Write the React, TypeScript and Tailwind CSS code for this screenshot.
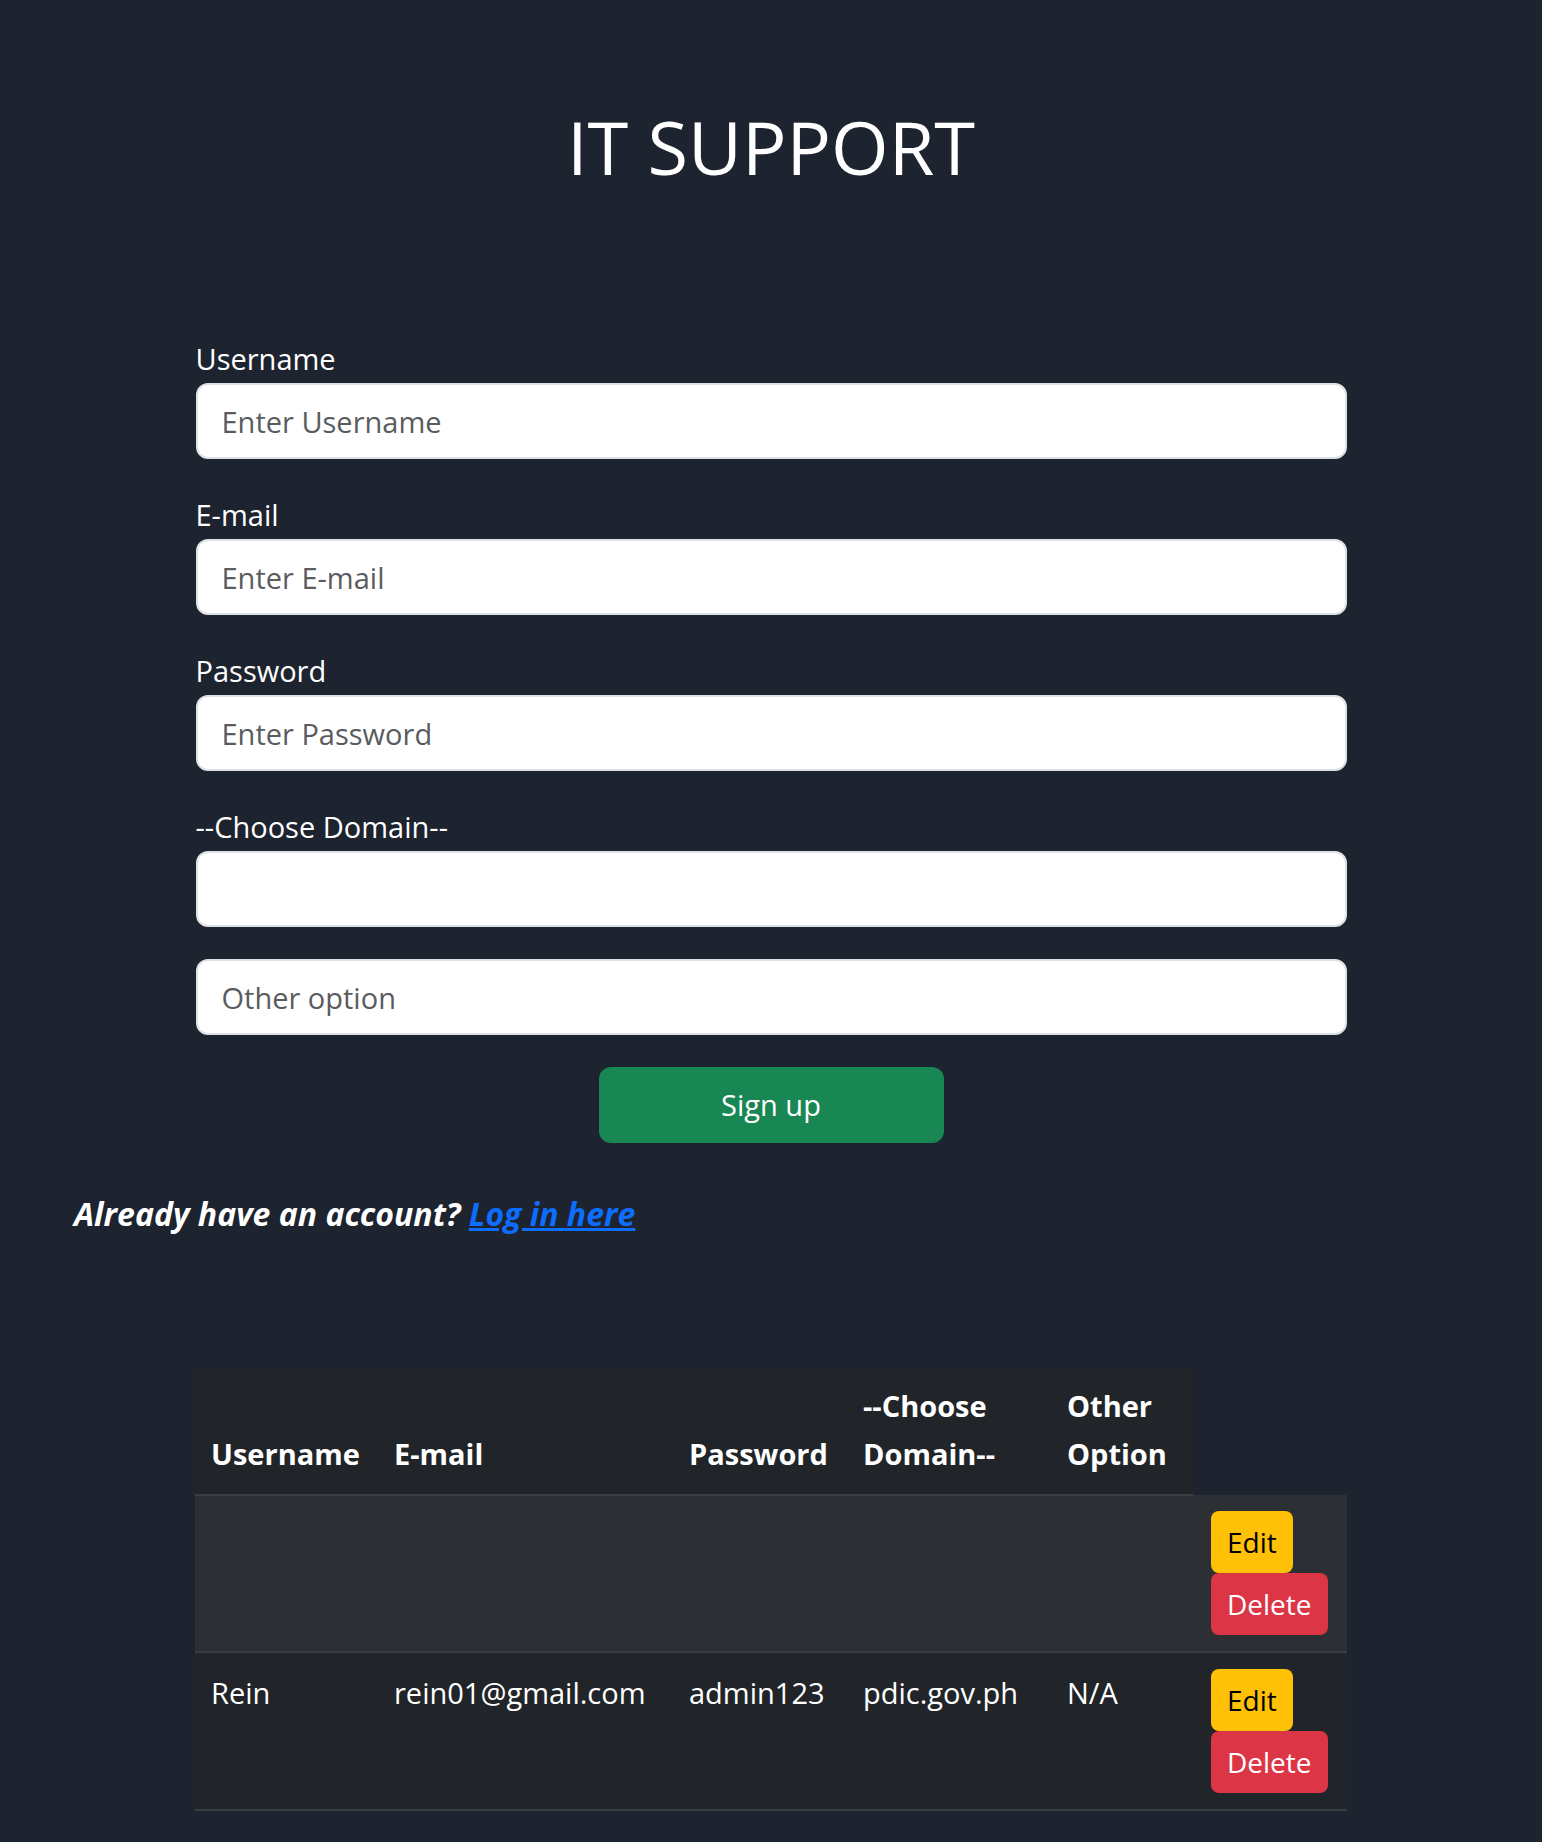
import React from 'react';

const rows = [
  { username: '', email: '', password: '', domain: '', other: '' },
  { username: 'Rein', email: 'rein01@gmail.com', password: 'admin123', domain: 'pdic.gov.ph', other: 'N/A' },
];

const Field = ({ label, placeholder }: { label?: string; placeholder?: string }) => (
  <div className="mb-[32px]">
    {label && <label className="block leading-[48px]">{label}</label>}
    <input
      type="text"
      placeholder={placeholder}
      className="block w-full h-[76px] px-[24px] bg-white text-[#212529] border-2 border-[#dee2e6] rounded-[12px] placeholder:text-[#595c5f] focus:outline-none"
    />
  </div>
);

const App = () => {
  return (
    <div className="min-h-screen bg-[#1e2330] text-white font-['Open_Sans',sans-serif] text-[29px]">
      <h1 className="pt-[99px] text-center text-[74px] leading-[96px] font-normal">IT SUPPORT</h1>

      <form className="w-[1151px] mx-auto mt-[140px]" onSubmit={(e) => e.preventDefault()}>
        <Field label="Username" placeholder="Enter Username" />
        <Field label="E-mail" placeholder="Enter E-mail" />
        <Field label="Password" placeholder="Enter Password" />
        <Field label="--Choose Domain--" />
        <Field placeholder="Other option" />
        <button
          type="submit"
          className="block mx-auto w-[345px] h-[76px] bg-[#198754] text-white rounded-[12px]"
        >
          Sign up
        </button>
      </form>

      <p className="pl-[74px] mt-[47px] leading-[48px] text-[32px] font-bold italic">
        Already have an account?{' '}
        <a href="#" className="text-[#0d6efd] underline">Log in here</a>
      </p>

      <table className="w-[1152px] mx-auto mt-[130px] table-fixed border-collapse">
        <colgroup>
          <col className="w-[183px]" />
          <col className="w-[295px]" />
          <col className="w-[174px]" />
          <col className="w-[204px]" />
          <col className="w-[142px]" />
          <col className="w-[154px]" />
        </colgroup>
        <thead>
          <tr className="align-bottom">
            {['Username', 'E-mail', 'Password', '--Choose Domain--', 'Other Option'].map((h) => (
              <th
                key={h}
                className="bg-[#212529] text-left font-bold leading-[48px] pt-[14px] pb-[16px] px-[16px] border-b-2 border-[#3a3e43]"
              >
                {h}
              </th>
            ))}
          </tr>
        </thead>
        <tbody>
          {rows.map((r, i) => (
            <tr key={i} className={i % 2 === 0 ? 'bg-[#2c3034] align-top' : 'bg-[#212529] align-top'}>
              {[r.username, r.email, r.password, r.domain, r.other].map((c, j) => (
                <td key={j} className="p-[16px] leading-[48px] whitespace-nowrap border-b-2 border-[#3a3e43]">
                  {c}
                </td>
              ))}
              <td className="py-[16px] pl-[18px] pr-[14px] border-b-2 border-[#3a3e43]">
                <div className="flex flex-col items-start">
                  <button className="h-[62px] px-[16px] bg-[#ffc107] text-black text-[28px] rounded-[8px]">Edit</button>
                  <button className="h-[62px] px-[16px] bg-[#dc3545] text-white text-[28px] rounded-[8px]">Delete</button>
                </div>
              </td>
            </tr>
          ))}
        </tbody>
      </table>
    </div>
  );
};

export default App;
